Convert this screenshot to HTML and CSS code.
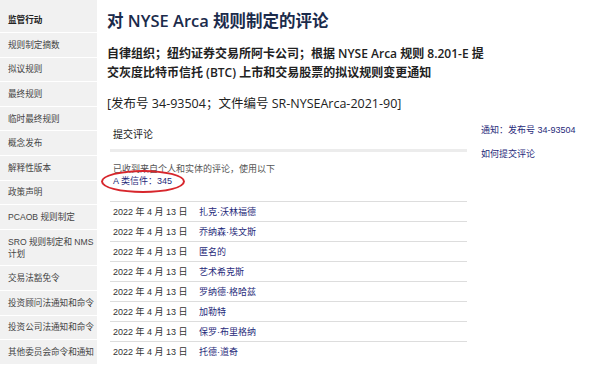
FILE: index.html
```html
<!DOCTYPE html>
<html lang="zh-CN">
<head>
    <meta charset="UTF-8">
    <meta name="viewport" content="width=device-width, initial-scale=1.0">
    <title>对 NYSE Arca 规则制定的评论</title>
    <link rel="stylesheet" href="styles.css">
</head>
<body>
    <div class="page">
        <!-- Left navigation -->
        <ul class="side-nav">
            <li class="nav-head">监管行动</li>
            <li>规则制定摘数</li>
            <li>拟议规则</li>
            <li>最终规则</li>
            <li>临时最终规则</li>
            <li>概念发布</li>
            <li>解释性版本</li>
            <li>政策声明</li>
            <li>PCAOB 规则制定</li>
            <li>SRO 规则制定和 NMS 计划</li>
            <li>交易法豁免令</li>
            <li>投资顾问法通知和命令</li>
            <li>投资公司法通知和命令</li>
            <li>其他委员会命令和通知</li>
        </ul>

        <div class="main">
            <h1 class="title">对 NYSE Arca 规则制定的评论</h1>
            <h2 class="subtitle">自律组织；纽约证券交易所阿卡公司；根据 NYSE Arca 规则 8.201-E 提交灰度比特币信托 (BTC) 上市和交易股票的拟议规则变更通知</h2>
            <p class="release">[发布号 34-93504；文件编号 SR-NYSEArca-2021-90]</p>

            <div class="columns">
                <div class="comments">
                    <h3 class="section-title">提交评论</h3>
                    <p class="intro">已收到来自个人和实体的评论，使用以下<br><a class="letter-type" href="#">A 类信件：345</a></p>

                    <table class="letters">
                        <tr><td class="date">2022 年 4 月 13 日</td><td><a href="#">扎克·沃林福德</a></td></tr>
                        <tr><td class="date">2022 年 4 月 13 日</td><td><a href="#">乔纳森·埃文斯</a></td></tr>
                        <tr><td class="date">2022 年 4 月 13 日</td><td><a href="#">匿名的</a></td></tr>
                        <tr><td class="date">2022 年 4 月 13 日</td><td><a href="#">艺术希克斯</a></td></tr>
                        <tr><td class="date">2022 年 4 月 13 日</td><td><a href="#">罗纳德·格哈兹</a></td></tr>
                        <tr><td class="date">2022 年 4 月 13 日</td><td><a href="#">加勒特</a></td></tr>
                        <tr><td class="date">2022 年 4 月 13 日</td><td><a href="#">保罗·布里格纳</a></td></tr>
                        <tr><td class="date">2022 年 4 月 13 日</td><td><a href="#">托德·道奇</a></td></tr>
                    </table>
                </div>

                <!-- Related links -->
                <div class="related">
                    <a href="#">通知：发布号 34-93504</a>
                    <a href="#">如何提交评论</a>
                </div>
            </div>
        </div>
    </div>
</body>
</html>
```

FILE: styles.css
```css
body {
    font-family: "Liberation Sans", "Noto Sans CJK SC", sans-serif;
    background-color: #fff;
    margin: 0;
    padding: 0;
    color: #333;
}

a {
    color: #1f2a7a;
    text-decoration: none;
}

.page {
    display: flex;
    align-items: flex-start;
}

.side-nav {
    list-style: none;
    margin: 0;
    padding: 0;
    width: 97px;
    flex-shrink: 0;
    background-color: #f1f1f1;
}

.side-nav li {
    font-size: 8.6px;
    line-height: 12px;
    padding: 5.8px 0 5.8px 8px;
    border-bottom: 1px solid #fff;
    color: #444;
}

.side-nav .nav-head {
    font-weight: bold;
    color: #222;
    padding-top: 14px;
    padding-bottom: 6px;
}

.main {
    flex: 1;
    padding: 9px 0 0 10px;
}

.title {
    font-family: "Open Sans", "Noto Sans CJK SC", sans-serif;
    font-size: 16.5px;
    line-height: 24px;
    font-weight: 600;
    color: #1b2b4b;
    margin: 0 0 11px 0;
}

.subtitle {
    font-family: "Open Sans", "Noto Sans CJK SC", sans-serif;
    font-size: 12px;
    line-height: 19px;
    font-weight: 600;
    color: #222;
    margin: 0;
    width: 382px;
}

.release {
    font-family: "Open Sans", "Noto Sans CJK SC", sans-serif;
    font-size: 12.5px;
    line-height: 19px;
    color: #222;
    margin: 12px 0 0 0;
}

.columns {
    display: flex;
    margin-top: 12px;
}

.comments {
    width: 357px;
    margin-left: 3px;
}

.section-title {
    font-size: 10px;
    font-weight: normal;
    color: #222;
    margin: 0;
    padding: 3px 0 0 3px;
    line-height: 14px;
    border-bottom: 3px solid #ececec;
    height: 21px;
}

.intro {
    font-size: 9px;
    line-height: 12px;
    color: #555;
    margin: 11px 0 0 3px;
}

.letter-type {
    position: relative;
    font-size: 9px;
}

/* red ellipse drawn around the letter count */
.letter-type::after {
    content: "";
    position: absolute;
    left: -12px;
    top: -6px;
    width: 80px;
    height: 19px;
    border: 2px solid #d7262c;
    border-radius: 50%;
}

.letters {
    width: 100%;
    border-collapse: collapse;
    margin-top: 14px;
    font-size: 9px;
}

.letters td {
    height: 19px;
    padding: 0 0 0 3px;
    border-top: 1px solid #ddd;
    color: #333;
    white-space: nowrap;
}

.letters .date {
    width: 83px;
}

.related {
    display: flex;
    flex-direction: column;
    gap: 13px;
    margin-left: 14px;
    padding-top: 0;
    font-size: 9px;
    line-height: 11px;
}
```
